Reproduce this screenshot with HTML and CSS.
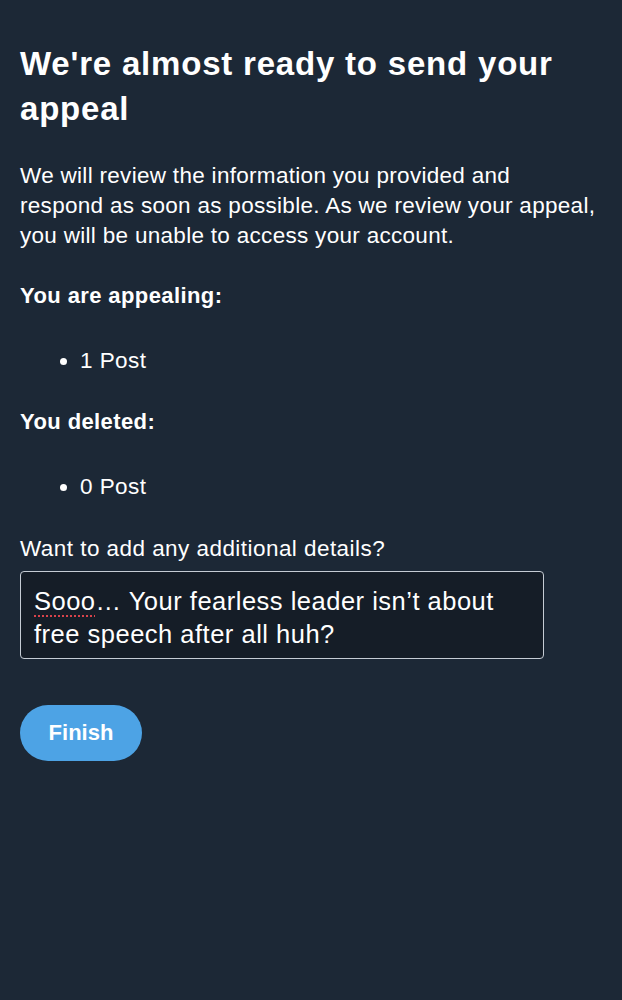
FILE: index.html
```html
<!DOCTYPE html>
<html lang="en">
<head>
    <meta charset="UTF-8">
    <meta name="viewport" content="width=device-width, initial-scale=1.0">
    <title>Appeal</title>
    <link rel="stylesheet" href="styles.css">
</head>
<body>
    <div class="appeal">
        <h1>We're almost ready to send your appeal</h1>

        <p class="intro">We will review the information you provided and respond as soon as possible. As we review your appeal, you will be unable to access your account.</p>

        <h3>You are appealing:</h3>
        <ul>
            <li>1 Post</li>
        </ul>

        <h3>You deleted:</h3>
        <ul>
            <li>0 Post</li>
        </ul>

        <label class="details-label" for="details">Want to add any additional details?</label>
        <div class="details" id="details"><span class="misspelled">Sooo</span>… Your fearless leader isn’t about free speech after all huh?</div>

        <button class="finish">Finish</button>
    </div>
</body>
</html>
```

FILE: styles.css
```css
body {
    margin: 0;
    background: #1c2836;
    color: #ffffff;
    font-family: "Liberation Sans", Arial, sans-serif;
}

.appeal {
    padding: 41px 10px 20px 20px;
}

h1 {
    font-size: 33px;
    line-height: 45px;
    letter-spacing: 0.8px;
    font-weight: bold;
    margin: 0 0 30px;
}

.intro {
    max-width: 578px;
    font-size: 22.5px;
    line-height: 30px;
    letter-spacing: 0.3px;
    margin: 0 0 31px;
}

h3 {
    font-size: 22px;
    line-height: 28px;
    letter-spacing: 0.4px;
    font-weight: bold;
    margin: 0;
}

ul {
    margin: 36px 0 32px;
    padding-left: 60px;
    font-size: 22.5px;
    line-height: 30px;
    letter-spacing: 0.45px;
}

.details-label {
    display: block;
    font-size: 22.5px;
    line-height: 30px;
    letter-spacing: 0.45px;
    margin-bottom: 7px;
}

.details {
    box-sizing: border-box;
    width: 524px;
    min-height: 88px;
    padding: 13px 13px 6px;
    background: #151d27;
    border: 1.5px solid #c5ccd4;
    border-radius: 4px;
    font-size: 25.5px;
    line-height: 33px;
    letter-spacing: 0.5px;
}

.misspelled {
    text-decoration: underline dotted #d9434b;
    text-underline-offset: 5px;
    text-decoration-thickness: 2px;
}

.finish {
    margin-top: 46px;
    width: 122px;
    height: 56px;
    border: none;
    border-radius: 28px;
    background: #4da3e5;
    color: #ffffff;
    font-family: "Liberation Sans", Arial, sans-serif;
    font-size: 22px;
    font-weight: bold;
}
```
